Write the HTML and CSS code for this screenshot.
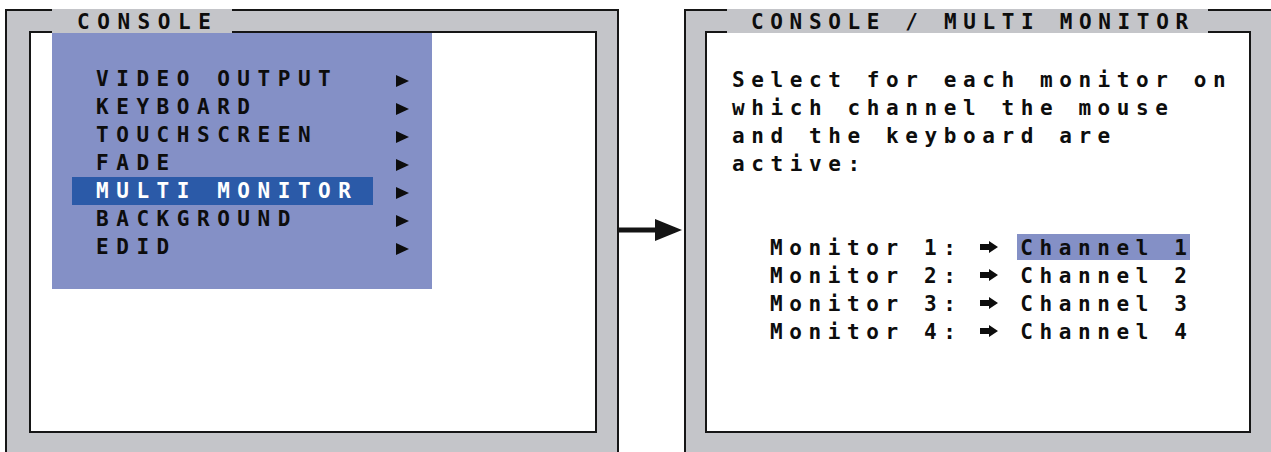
FILE: index.html
```html
<!DOCTYPE html>
<html lang="en">
<head>
<meta charset="utf-8">
<title>Console / Multi Monitor</title>
<link rel="stylesheet" href="styles.css">
</head>
<body>
<div class="screen">
  <section class="panel panel-left">
    <div class="tab tab-left">CONSOLE</div>
    <div class="inner">
      <ul class="menu">
        <li class="row"><span class="label">VIDEO OUTPUT</span><svg class="tri" width="13" height="12" viewBox="0 0 13 12"><path d="M0 0 L13 6 L0 12 Z"/></svg></li>
        <li class="row"><span class="label">KEYBOARD</span><svg class="tri" width="13" height="12" viewBox="0 0 13 12"><path d="M0 0 L13 6 L0 12 Z"/></svg></li>
        <li class="row"><span class="label">TOUCHSCREEN</span><svg class="tri" width="13" height="12" viewBox="0 0 13 12"><path d="M0 0 L13 6 L0 12 Z"/></svg></li>
        <li class="row"><span class="label">FADE</span><svg class="tri" width="13" height="12" viewBox="0 0 13 12"><path d="M0 0 L13 6 L0 12 Z"/></svg></li>
        <li class="row"><span class="label selected">MULTI MONITOR</span><svg class="tri" width="13" height="12" viewBox="0 0 13 12"><path d="M0 0 L13 6 L0 12 Z"/></svg></li>
        <li class="row"><span class="label">BACKGROUND</span><svg class="tri" width="13" height="12" viewBox="0 0 13 12"><path d="M0 0 L13 6 L0 12 Z"/></svg></li>
        <li class="row"><span class="label">EDID</span><svg class="tri" width="13" height="12" viewBox="0 0 13 12"><path d="M0 0 L13 6 L0 12 Z"/></svg></li>
      </ul>
    </div>
  </section>

  <div class="link">
    <svg class="link-arrow" width="64" height="22" viewBox="0 0 64 22"><path d="M0 8.5 H36 V0 L63 11 L36 22 V13.5 H0 Z"/></svg>
  </div>

  <section class="panel panel-right">
    <div class="tab tab-right">CONSOLE / MULTI MONITOR</div>
    <div class="inner inner-right">
      <p class="intro">Select for each monitor on<br>which channel the mouse<br>and the keyboard are<br>active:</p>
      <div class="monitors">
        <div class="mon">Monitor 1: <span class="arr"><svg width="18" height="12" viewBox="0 0 18 12"><path d="M0 3 H9 V0 L18 6 L9 12 V9 H0 Z"/></svg></span> <span class="chan active">Channel 1</span></div>
        <div class="mon">Monitor 2: <span class="arr"><svg width="18" height="12" viewBox="0 0 18 12"><path d="M0 3 H9 V0 L18 6 L9 12 V9 H0 Z"/></svg></span> <span class="chan">Channel 2</span></div>
        <div class="mon">Monitor 3: <span class="arr"><svg width="18" height="12" viewBox="0 0 18 12"><path d="M0 3 H9 V0 L18 6 L9 12 V9 H0 Z"/></svg></span> <span class="chan">Channel 3</span></div>
        <div class="mon">Monitor 4: <span class="arr"><svg width="18" height="12" viewBox="0 0 18 12"><path d="M0 3 H9 V0 L18 6 L9 12 V9 H0 Z"/></svg></span> <span class="chan">Channel 4</span></div>
      </div>
    </div>
  </section>
</div>
</body>
</html>
```

FILE: styles.css
```css
html, body {
  margin: 0;
  padding: 0;
  background: #ffffff;
}

body {
  width: 1271px;
  height: 452px;
  overflow: hidden;
  font-family: "DejaVu Sans Mono", "Liberation Mono", monospace;
  font-weight: bold;
  font-size: 21px;
  color: #0d0d0d;
}

.screen {
  display: flex;
  align-items: flex-start;
  box-sizing: border-box;
  width: 1271px;
  height: 452px;
  padding: 9px 0 0 5px;
}

.panel {
  position: relative;
  flex: none;
  box-sizing: border-box;
  height: 443px;
  background: #c4c5c9;
  border: 2px solid #161616;
  border-bottom: none;
  padding: 20px 20px 0 22px;
}

.panel-left {
  width: 614px;
}

.panel-right {
  width: 587px;
  padding-left: 19px;
  border-right: none;
}

.tab {
  position: absolute;
  top: -2px;
  box-sizing: border-box;
  height: 24px;
  padding-top: 1px;
  line-height: 24px;
  background: #c4c5c9;
  white-space: pre;
  color: #0d0d0d;
}

.tab-left {
  left: 45px;
  padding-left: 25px;
  padding-right: 14px;
  letter-spacing: 7.55px;
}

.tab-right {
  left: 41px;
  padding-left: 24px;
  padding-right: 13px;
  letter-spacing: 6.65px;
}

.inner {
  box-sizing: border-box;
  height: 402px;
  background: #ffffff;
  border: 2px solid #161616;
  padding-left: 21px;
}

.menu {
  list-style: none;
  margin: 0;
  padding: 32px 0 0 0;
  box-sizing: border-box;
  width: 380px;
  height: 256px;
  background: #8490c6;
}

.row {
  display: flex;
  align-items: center;
  height: 28px;
}

.label {
  box-sizing: border-box;
  width: 301px;
  margin-left: 20px;
  padding-left: 24px;
  height: 28px;
  line-height: 28px;
  letter-spacing: 7.55px;
  white-space: pre;
  color: #0d0d0d;
}

.label.selected {
  background: #2b5aa8;
  color: #ffffff;
}

.tri {
  flex: none;
  margin-left: 23px;
  margin-top: 4px;
  fill: #0d0d0d;
}

.link {
  flex: none;
  width: 65px;
}

.link-arrow {
  display: block;
  margin-top: 210px;
  fill: #141414;
}

.inner-right {
  padding-left: 25px;
  padding-top: 33px;
}

.intro {
  margin: 0;
  line-height: 28px;
  letter-spacing: 6.6px;
  white-space: nowrap;
}

.monitors {
  margin: 56px 0 0 38px;
}

.mon {
  line-height: 28px;
  height: 28px;
  letter-spacing: 6.6px;
  white-space: pre;
}

.arr {
  display: inline-block;
  width: 19.25px;
  letter-spacing: 0;
}

.arr svg {
  vertical-align: 2px;
  margin-left: -2px;
  fill: #0d0d0d;
}

.chan {
  display: inline-block;
  box-sizing: border-box;
  width: 173px;
  margin-left: -3px;
  padding: 2px 0 0 3px;
  line-height: 24px;
  white-space: pre;
}

.chan.active {
  background: #8490c6;
}
```
